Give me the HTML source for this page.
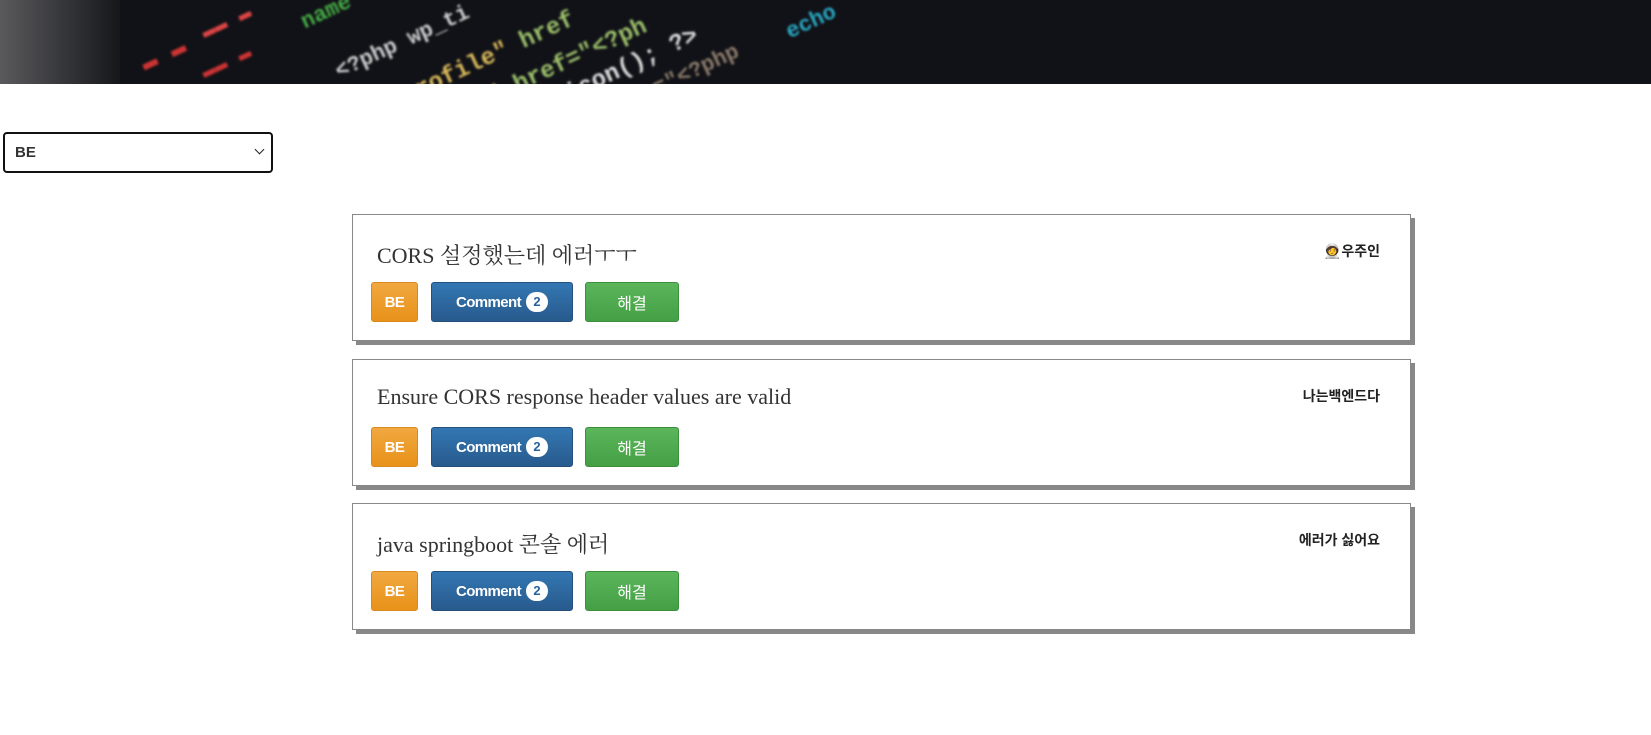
<!DOCTYPE html>
<html><head><meta charset="utf-8"><style>
body{margin:0;width:1651px;height:735px;background:#fff;overflow:hidden;font-family:"Liberation Sans","Noto Sans CJK KR",sans-serif;}
.hdr{position:absolute;left:0;top:0;width:1651px;height:84px;background:#111217;overflow:hidden;}
.hdr .l{position:absolute;left:0;top:0;width:120px;height:84px;background:linear-gradient(90deg,#5a5a5c,#2a2b2e 70%,#16171a);}
.hdr span{position:absolute;font-family:"Liberation Mono",monospace;font-weight:bold;filter:blur(1px);transform:rotate(-25deg);white-space:nowrap;}
select{position:absolute;left:3px;top:132px;width:270px;height:41px;border:2px solid #111;border-radius:4px;background:#fff;font-family:"Liberation Sans",sans-serif;font-weight:bold;font-size:15px;padding-left:10px;color:#333;-webkit-appearance:none;appearance:none;}
.chev{position:absolute;left:256px;top:146px;width:6px;height:6px;border-right:1.6px solid #222;border-bottom:1.6px solid #222;transform:rotate(45deg);}
.card{position:absolute;left:352px;width:1057px;height:125px;border:1px solid #888;box-shadow:4px 4px 0 #888;background:#fff;}
.t{position:absolute;left:24px;top:24px;font-family:"Liberation Serif","Noto Serif CJK SC",serif;font-size:22px;color:#333;}
.a{position:absolute;right:30px;top:26px;font-size:14px;font-weight:bold;color:#222;}
.b{position:absolute;top:67px;height:40px;border-radius:3px;color:#fff;box-sizing:border-box;display:flex;align-items:center;justify-content:center;font-weight:bold;}
.be{left:18px;width:47px;background:linear-gradient(#f0a840,#e8921a);border:1px solid #d88a20;font-size:15px;letter-spacing:-0.5px;}
.cm{left:78px;width:142px;background:linear-gradient(#3377b3,#285a8d);border:1px solid #24507e;font-size:15px;letter-spacing:-0.6px;}
.cm i{font-style:normal;display:inline-block;width:22px;height:20px;border-radius:10px;background:#fff;color:#2a62a0;font-size:13px;line-height:20px;text-align:center;margin-left:5px;letter-spacing:0;}
.ok{left:232px;width:94px;background:linear-gradient(#5bb65b,#45a045);border:1px solid #3d8f3d;font-weight:normal;font-size:16px;}
</style></head><body>
<div class="hdr"><div class="l"></div>
<span style="left:140px;top:40px;color:#c33;font-size:26px">▬ ▬</span>
<span style="left:200px;top:10px;color:#d44;font-size:22px">▬▬ ▬</span>
<span style="left:200px;top:50px;color:#c33;font-size:22px">▬▬ ▬</span>
<span style="left:300px;top:0px;color:#4a4;font-size:22px">name</span>
<span style="left:330px;top:30px;color:#ccc;font-size:22px">&lt;?php wp_ti</span>
<span style="left:395px;top:45px;color:#d8b85a;font-size:24px">profile" <b style="color:#9bbf6a">href</b></span>
<span style="left:440px;top:58px;color:#d8b85a;font-size:24px">ack" <b style="color:#9bbf6a">href="&lt;?ph</b></span>
<span style="left:560px;top:52px;color:#ddd;font-size:24px">icon(); ?&gt;</span>
<span style="left:650px;top:58px;color:#8a7a6a;font-size:22px">="&lt;?php</span>
<span style="left:785px;top:10px;color:#29a8c4;font-size:22px">echo</span>
</div>
<select><option>BE</option></select><div class="chev"></div>

<div class="card" style="top:214px"><div class="t">CORS 설정했는데 에러ㅜㅜ</div><div class="a">🧑‍🚀우주인</div>
<div class="b be">BE</div><div class="b cm">Comment<i>2</i></div><div class="b ok">해결</div></div>

<div class="card" style="top:359px"><div class="t">Ensure CORS response header values are valid</div><div class="a">나는백엔드다</div>
<div class="b be">BE</div><div class="b cm">Comment<i>2</i></div><div class="b ok">해결</div></div>

<div class="card" style="top:503px"><div class="t">java springboot 콘솔 에러</div><div class="a">에러가 싫어요</div>
<div class="b be">BE</div><div class="b cm">Comment<i>2</i></div><div class="b ok">해결</div></div>
</body></html>
